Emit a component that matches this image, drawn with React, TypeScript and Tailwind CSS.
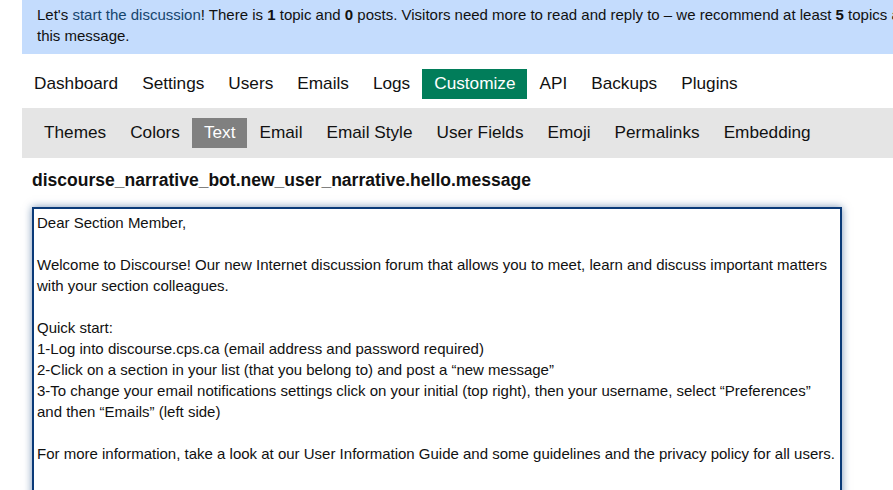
const mainNav = ['Dashboard', 'Settings', 'Users', 'Emails', 'Logs', 'Customize', 'API', 'Backups', 'Plugins'];
const subNav = ['Themes', 'Colors', 'Text', 'Email', 'Email Style', 'User Fields', 'Emoji', 'Permalinks', 'Embedding'];

const lines = [
  'Dear Section Member,',
  '',
  'Welcome to Discourse! Our new Internet discussion forum that allows you to meet, learn and discuss important matters',
  'with your section colleagues.',
  '',
  'Quick start:',
  '1-Log into discourse.cps.ca (email address and password required)',
  '2-Click on a section in your list (that you belong to) and post a “new message”',
  '3-To change your email notifications settings click on your initial (top right), then your username, select “Preferences”',
  'and then “Emails” (left side)',
  '',
  'For more information, take a look at our User Information Guide and some guidelines and the privacy policy for all users.',
];

export default function App() {
  return (
    <div className="h-[490px] w-[893px] overflow-hidden bg-white pl-[22px] font-['Liberation_Sans',Arial,sans-serif] text-[#111111]">
      <div className="w-[900px]">
        <div className="h-[54px] overflow-hidden whitespace-nowrap bg-[#c4dcfd] pl-[15px] pt-[4px] text-[15px] leading-[21px]">
          Let's <a className="text-[#16456e]">start the discussion</a>! There is <b>1</b> topic and <b>0</b> posts. Visitors need more to read and reply to – we recommend at least <b>5</b> topics and
          <br />
          this message.
        </div>

        <nav className="mt-[15px] flex h-[30px]">
          {mainNav.map((item) => (
            <span
              key={item}
              className={`h-[30px] px-3 text-[17.22px] leading-[28px] ${item === 'Customize' ? 'bg-[#017d5a] text-white' : 'text-[#111111]'}`}
            >
              {item}
            </span>
          ))}
        </nav>

        <nav className="mt-[9px] flex h-[50px] items-center bg-[#e5e5e5] pl-[10px]">
          {subNav.map((item) => (
            <span
              key={item}
              className={`h-[30px] px-3 text-[17.22px] leading-[28px] ${item === 'Text' ? 'bg-[#808080] text-white' : 'text-[#111111]'}`}
            >
              {item}
            </span>
          ))}
        </nav>

        <div className="pl-[10px]">
          <h3 className="mt-[11px] text-[17.55px] font-bold leading-[22px] text-[#111111]">
            discourse_narrative_bot.new_user_narrative.hello.message
          </h3>
          <div className="mt-[16px] h-[320px] w-[810px] border-2 border-[#0a3a78] bg-white pl-[3px] pt-[3px] text-[15px] leading-[21px] shadow-[0_0_8px_rgba(10,58,120,0.55)]">
            {lines.map((line, i) => (
              <div key={i} className="h-[21px] whitespace-nowrap">
                {line}
              </div>
            ))}
          </div>
        </div>
      </div>
    </div>
  );
}
